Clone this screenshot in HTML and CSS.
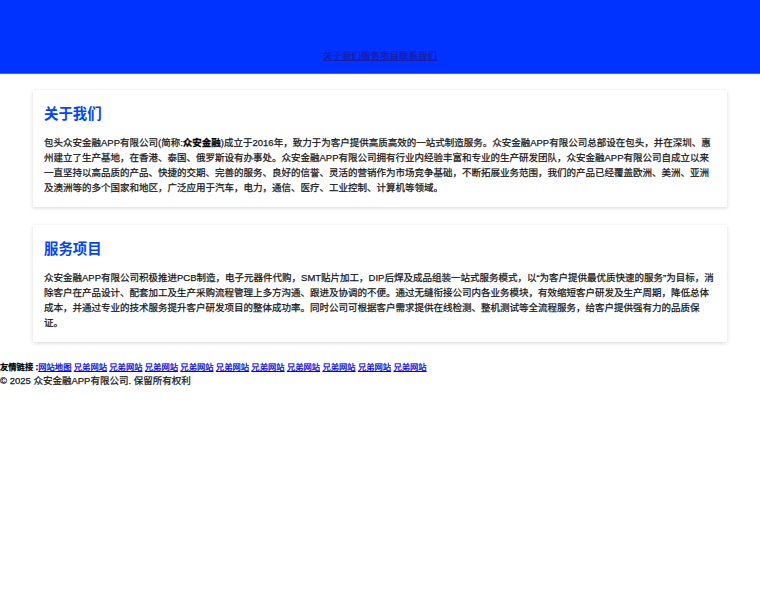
FILE: index.html
```html
<!DOCTYPE html>
<html lang="zh-CN">
<head>
<meta charset="utf-8">
<title>众安金融APP有限公司</title>
<link rel="stylesheet" href="styles.css">
</head>
<body>
<header class="site-header">
  <nav class="nav"><a href="#about">关于我们</a><a href="#services">服务项目</a><a href="#contact">联系我们</a></nav>
</header>
<main class="container">
  <section class="card" id="about">
    <h2 class="card-title">关于我们</h2>
    <p class="card-text">包头众安金融APP有限公司(简称:<strong>众安金融</strong>)成立于2016年，致力于为客户提供高质高效的一站式制造服务。众安金融APP有限公司总部设在包头，并在深圳、惠州建立了生产基地，在香港、泰国、俄罗斯设有办事处。众安金融APP有限公司拥有行业内经验丰富和专业的生产研发团队，众安金融APP有限公司自成立以来一直坚持以高品质的产品、快捷的交期、完善的服务、良好的信誉、灵活的营销作为市场竞争基础，不断拓展业务范围，我们的产品已经覆盖欧洲、美洲、亚洲及澳洲等的多个国家和地区，广泛应用于汽车，电力，通信、医疗、工业控制、计算机等领域。</p>
  </section>
  <section class="card" id="services">
    <h2 class="card-title">服务项目</h2>
    <p class="card-text">众安金融APP有限公司积极推进PCB制造，电子元器件代购，SMT贴片加工，DIP后焊及成品组装一站式服务模式，以“为客户提供最优质快速的服务”为目标，消除客户在产品设计、配套加工及生产采购流程管理上多方沟通、跟进及协调的不便。通过无缝衔接公司内各业务模块，有效缩短客户研发及生产周期，降低总体成本，并通过专业的技术服务提升客户研发项目的整体成功率。同时公司可根据客户需求提供在线检测、整机测试等全流程服务，给客户提供强有力的品质保证。</p>
  </section>
</main>
<footer class="site-footer" id="contact">
  <div class="links"><b class="links-label">友情链接 :</b><a href="#">网站地图</a> <a href="#">兄弟网站</a> <a href="#">兄弟网站</a> <a href="#">兄弟网站</a> <a href="#">兄弟网站</a> <a href="#">兄弟网站</a> <a href="#">兄弟网站</a> <a href="#">兄弟网站</a> <a href="#">兄弟网站</a> <a href="#">兄弟网站</a> <a href="#">兄弟网站</a></div>
  <div class="copy">© 2025 众安金融APP有限公司. 保留所有权利</div>
</footer>
</body>
</html>
```
FILE: styles.css
```css
html, body {
  margin: 0;
  padding: 0;
  background: #ffffff;
}
body {
  font-family: "Liberation Sans", "Noto Sans CJK SC", sans-serif;
  font-size: 9.5px;
  color: #1a1a1a;
  -webkit-text-stroke: 0.25px currentColor;
}
.site-header {
  box-sizing: border-box;
  height: 74px;
  background: #0033ff;
  border-bottom: 1px solid #2f60ff;
  display: flex;
  justify-content: center;
  align-items: flex-start;
  padding-top: 49px;
}
.nav {
  line-height: 14px;
}
.nav a {
  color: #1c1ca8;
  text-decoration: underline;
}
.container {
  padding: 16px 33px 0;
  display: flex;
  flex-direction: column;
  gap: 18px;
}
.card {
  background: #ffffff;
  box-shadow: 0 1px 4px rgba(0, 0, 0, 0.16);
  padding: 12px 11px 12px 11px;
}
.card-title {
  margin: 0 0 9px;
  font-size: 14.4px;
  line-height: 24px;
  font-weight: bold;
  color: #0044ff;
  -webkit-text-stroke: 0;
}
.card-text {
  margin: 0;
  line-height: 15px;
  color: #1a1a1a;
}
.card-text strong {
  color: #000000;
}
.site-footer {
  padding-top: 18px;
  line-height: 14px;
  color: #1a1a1a;
}
.links {
  font-size: 8.3px;
}
.links-label {
  color: #000000;
}
.links a {
  color: #0000ee;
  text-decoration: underline;
}
```
